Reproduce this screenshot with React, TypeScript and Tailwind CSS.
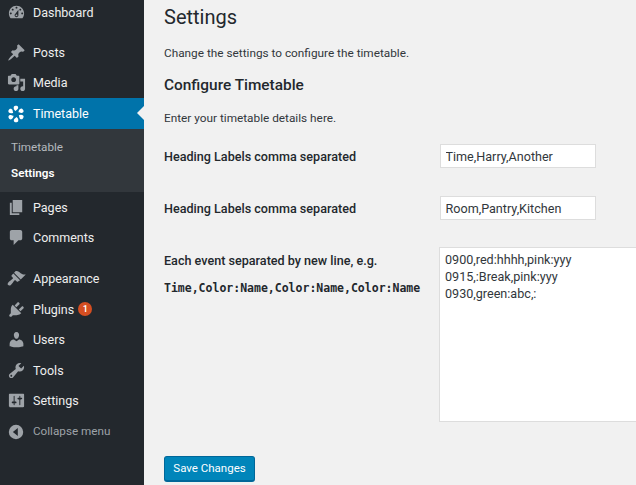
import React from 'react';

const ICONS: Record<string, string> = {
  dashboard: 'M3.76 16h12.48c1.1-1.37 1.76-3.11 1.76-5 0-4.42-3.58-8-8-8s-8 3.58-8 8c0 1.89.66 3.63 1.76 5zM10 4c.55 0 1 .45 1 1s-.45 1-1 1-1-.45-1-1 .45-1 1-1zM6 6c.55 0 1 .45 1 1s-.45 1-1 1-1-.45-1-1 .45-1 1-1zm8 0c.55 0 1 .45 1 1s-.45 1-1 1-1-.45-1-1 .45-1 1-1zm-5.37 5.55L12 7v6c0 1.1-.9 2-2 2s-2-.9-2-2c0-.57.24-1.08.63-1.45zM4 10c.55 0 1 .45 1 1s-.45 1-1 1-1-.45-1-1 .45-1 1-1zm12 0c.55 0 1 .45 1 1s-.45 1-1 1-1-.45-1-1 .45-1 1-1zm-5 3c0-.55-.45-1-1-1s-1 .45-1 1 .45 1 1 1 1-.45 1-1z',
  posts: 'M10.44 3.02l1.82-1.82 6.36 6.35-1.83 1.82c-1.05-.68-2.48-.57-3.41.36l-.75.75c-.92.93-1.04 2.35-.35 3.41l-1.83 1.82-2.41-2.41-2.8 2.79c-.42.42-3.38 2.71-3.8 2.29s1.86-3.39 2.28-3.81l2.79-2.79L4.1 9.36l1.83-1.82c1.05.69 2.48.57 3.4-.36l.75-.75c.93-.92 1.05-2.35.36-3.41z',
  media: 'M13 11V4c0-.55-.45-1-1-1h-1.67L9 1H5L3.67 3H2c-.55 0-1 .45-1 1v7c0 .55.45 1 1 1h10c.55 0 1-.45 1-1zM7 4.5c1.38 0 2.5 1.12 2.5 2.5S8.38 9.5 7 9.5 4.5 8.38 4.5 7 5.62 4.5 7 4.5zM14 6h5v10.5c0 1.38-1.12 2.5-2.5 2.5S14 17.88 14 16.5s1.12-2.5 2.5-2.5c.17 0 .34.02.5.05V9h-3V6zm-4 8.05V13h2v3.5c0 1.38-1.12 2.5-2.5 2.5S7 17.88 7 16.5 8.12 14 9.5 14c.17 0 .34.02.5.05z',
  pages: 'M6 15V2h10v13H6zm-1 1h8v2H3V5h2v11z',
  comments: 'M5 2h9c1.1 0 2 .9 2 2v7c0 1.1-.9 2-2 2h-2l-5 5v-5H5c-1.1 0-2-.9-2-2V4c0-1.1.9-2 2-2z',
  appearance: 'M14.48 11.06L7.41 3.99l1.5-1.5c.5-.56 2.3-.47 3.51.32 1.21.8 1.43 1.28 2.91 2.1 1.18.64 2.45 1.26 4.45.85zm-.71.71L6.7 4.7 4.93 6.47c-.39.39-.39 1.02 0 1.41l1.06 1.06c.39.39.39 1.03 0 1.42-.6.6-1.43 1.11-2.21 1.7-.78.58-1.6 1.2-2.2 1.8-.9.9-1.3 2.2-.4 3.1s2.2.5 3.1-.4c.6-.6 1.22-1.42 1.8-2.2.59-.78 1.1-1.61 1.7-2.21.39-.39 1.03-.39 1.42 0l1.06 1.06c.39.39 1.02.39 1.41 0z',
  plugins: 'M13.11 4.36L9.87 7.6 8 5.73l3.24-3.24c.35-.34 1.05-.2 1.56.32.52.51.66 1.21.31 1.55zm-8 1.77l.91-1.12 9.01 9.01-1.19.84c-.71.71-2.63 1.16-3.82 1.16H6.14L4.9 17.26c-.59.59-1.54.59-2.12 0-.59-.58-.59-1.53 0-2.12l1.24-1.24v-3.88c0-1.13.4-3.19 1.09-3.89zm7.26 3.97l3.24-3.24c.34-.35 1.04-.21 1.55.31.52.51.66 1.21.31 1.55l-3.24 3.25z',
  users: 'M10 9.25c-2.27 0-2.73-3.44-2.73-3.44C7 4.02 7.82 2 9.97 2c2.16 0 2.98 2.02 2.71 3.81 0 0-.41 3.44-2.68 3.44zm0 2.57L12.72 10c2.39 0 4.52 2.33 4.52 4.53v2.49s-3.65 1.13-7.24 1.13c-3.65 0-7.24-1.13-7.24-1.13v-2.49c0-2.25 1.94-4.48 4.47-4.48z',
  tools: 'M16.68 9.77c-1.34 1.34-3.3 1.67-4.95.99l-5.41 6.52c-.99.99-2.59.99-3.58 0s-.99-2.59 0-3.57l6.52-5.42c-.68-1.65-.35-3.61.99-4.95 1.28-1.28 3.12-1.62 4.72-1.06l-2.89 2.89 2.82 2.82 2.86-2.87c.53 1.58.18 3.39-1.08 4.65zM3.81 16.21c.4.39 1.04.39 1.43 0 .4-.4.4-1.04 0-1.43-.39-.4-1.03-.4-1.43 0-.39.39-.39 1.03 0 1.43z',
  settings: 'M18 16V4c0-.55-.45-1-1-1H3c-.55 0-1 .45-1 1v12c0 .55.45 1 1 1h14c.55 0 1-.45 1-1zM8 11h1c.55 0 1 .45 1 1s-.45 1-1 1H8v1.5c0 .28-.22.5-.5.5s-.5-.22-.5-.5V13H6c-.55 0-1-.45-1-1s.45-1 1-1h1V5.5c0-.28.22-.5.5-.5s.5.22.5.5V11zm5-2h-1c-.55 0-1-.45-1-1s.45-1 1-1h1V5.5c0-.28.22-.5.5-.5s.5.22.5.5V7h1c.55 0 1 .45 1 1s-.45 1-1 1h-1v5.5c0 .28-.22.5-.5.5s-.5-.22-.5-.5V9z',
  collapse: 'M10 2a8 8 0 1 0 0 16 8 8 0 0 0 0-16zm2 3.5v9L6.5 10z',
};

const Icon = ({ name, className }: { name: string; className: string }) => (
  <svg viewBox="0 0 20 20" className={className} fill="currentColor" fillRule="evenodd">
    <path d={ICONS[name]} />
  </svg>
);

// swirl logo of the timetable plugin, six petals around a hole
const Swirl = () => (
  <svg viewBox="0 0 20 20" className="w-[18px] h-[18px] text-white" fill="currentColor">
    {[0, 60, 120, 180, 240, 300].map((a) => (
      <path key={a} transform={`rotate(${a} 10 10)`} d="M9.6 6.6C8 5.6 6.9 3.8 7.6 1.9 8.2.8 10.3.4 11.6 1.2c1.1.8 1 2.3.3 3.2-.9 1-1.8 1.4-2.3 2.2z" />
    ))}
  </svg>
);

const MenuItem = ({ icon, label, badge, className = '' }: { icon: string; label: string; badge?: string; className?: string }) => (
  <div className={`flex items-center h-[30.5px] text-[12.5px] text-[#eeeeee] ${className}`}>
    <div className="w-[33px] pr-[1px] flex justify-center text-[#9ea3a8]">
      <Icon name={icon} className="w-[19px] h-[19px]" />
    </div>
    <span className="pt-[2px]">{label}</span>
    {badge && (
      <span className="ml-[4px] w-[14px] h-[14px] rounded-full bg-[#d54e21] text-white text-[9px] font-semibold flex items-center justify-center">
        {badge}
      </span>
    )}
  </div>
);

const labelClass = 'w-[276px] shrink-0 pt-[2px] text-[12.6px] font-medium text-[#23282d]';
const inputClass = 'w-[156px] h-[24px] bg-white border border-[#dddddd] px-[4.5px] text-[12.6px] outline-none';

export default function App() {
  return (
    <div className="flex w-[636px] h-[485px] overflow-hidden bg-[#f1f1f1] font-['Roboto',sans-serif] text-[#32373c]">
      <aside className="w-[144px] shrink-0 bg-[#23282d] overflow-hidden">
        <div className="-mt-[3px]">
          <MenuItem icon="dashboard" label="Dashboard" />
          <MenuItem icon="posts" label="Posts" className="mt-[9.5px]" />
          <MenuItem icon="media" label="Media" />
          <div className="relative flex items-center h-[31px] bg-[#0073aa] text-[12.5px] text-white">
            <div className="w-[33px] pr-[1px] flex justify-center">
              <Swirl />
            </div>
            <span className="pt-[2px]">Timetable</span>
            <div className="absolute right-0 top-[8px] w-0 h-0 border-y-[7.5px] border-y-transparent border-r-[7px] border-r-[#f1f1f1]" />
          </div>
          <div className="h-[63px] bg-[#32373c] pt-[6px] pl-[11px] text-[11.7px] leading-[25.5px]">
            <div className="text-[#b4b9be]">Timetable</div>
            <div className="text-white font-semibold">Settings</div>
          </div>
          <MenuItem icon="pages" label="Pages" />
          <MenuItem icon="comments" label="Comments" />
          <MenuItem icon="appearance" label="Appearance" className="mt-[10.5px]" />
          <MenuItem icon="plugins" label="Plugins" badge="1" />
          <MenuItem icon="users" label="Users" />
          <MenuItem icon="tools" label="Tools" />
          <MenuItem icon="settings" label="Settings" />
          <div className="flex items-center h-[30.5px] mt-[1px] text-[11.7px] text-[#9ea3a8]">
            <div className="w-[33px] pr-[1px] flex justify-center">
              <Icon name="collapse" className="w-[18px] h-[18px]" />
            </div>
            <span>Collapse menu</span>
          </div>
        </div>
      </aside>

      <main className="flex-1 pl-[20px] min-w-0 overflow-hidden">
        <h1 className="text-[20px] leading-[28px] mt-[3px] text-[#23282d]">Settings</h1>
        <p className="text-[11.8px] leading-[18px] mt-[13px]">Change the settings to configure the timetable.</p>
        <h2 className="text-[15.4px] leading-[20px] font-medium mt-[13px] text-[#23282d]">Configure Timetable</h2>
        <p className="text-[11.8px] leading-[18px] mt-[14px]">Enter your timetable details here.</p>

        <div className="flex items-center mt-[16px] h-[26px]">
          <label className={labelClass}>Heading Labels comma separated</label>
          <input readOnly value="Time,Harry,Another" className={inputClass} />
        </div>
        <div className="flex items-center mt-[26px] h-[26px]">
          <label className={labelClass}>Heading Labels comma separated</label>
          <input readOnly value="Room,Pantry,Kitchen" className={inputClass} />
        </div>
        <div className="flex mt-[26px]">
          <div className="w-[275px] shrink-0">
            <div className="text-[12.6px] font-medium leading-[18px] mt-[5px] text-[#23282d]">Each event separated by new line, e.g.</div>
            <code className="block font-['DejaVu_Sans_Mono',monospace] font-bold text-[11.5px] leading-[16px] mt-[10px] text-[#23282d] whitespace-nowrap">Time,Color:Name,Color:Name,Color:Name</code>
          </div>
          <textarea
            readOnly
            className="w-[220px] shrink-0 h-[175px] bg-white border border-[#dddddd] px-[5px] py-[3px] text-[12.6px] leading-[17px] outline-none resize-none overflow-hidden"
            value={'0900,red:hhhh,pink:yyy\n0915,:Break,pink:yyy\n0930,green:abc,:'}
          />
        </div>
        <button className="block mt-[34px] w-[91px] h-[26px] rounded-[3px] bg-[#0085ba] border border-[#006799] border-b-[2px] text-white text-[11.5px]">
          Save Changes
        </button>
      </main>
    </div>
  );
}
